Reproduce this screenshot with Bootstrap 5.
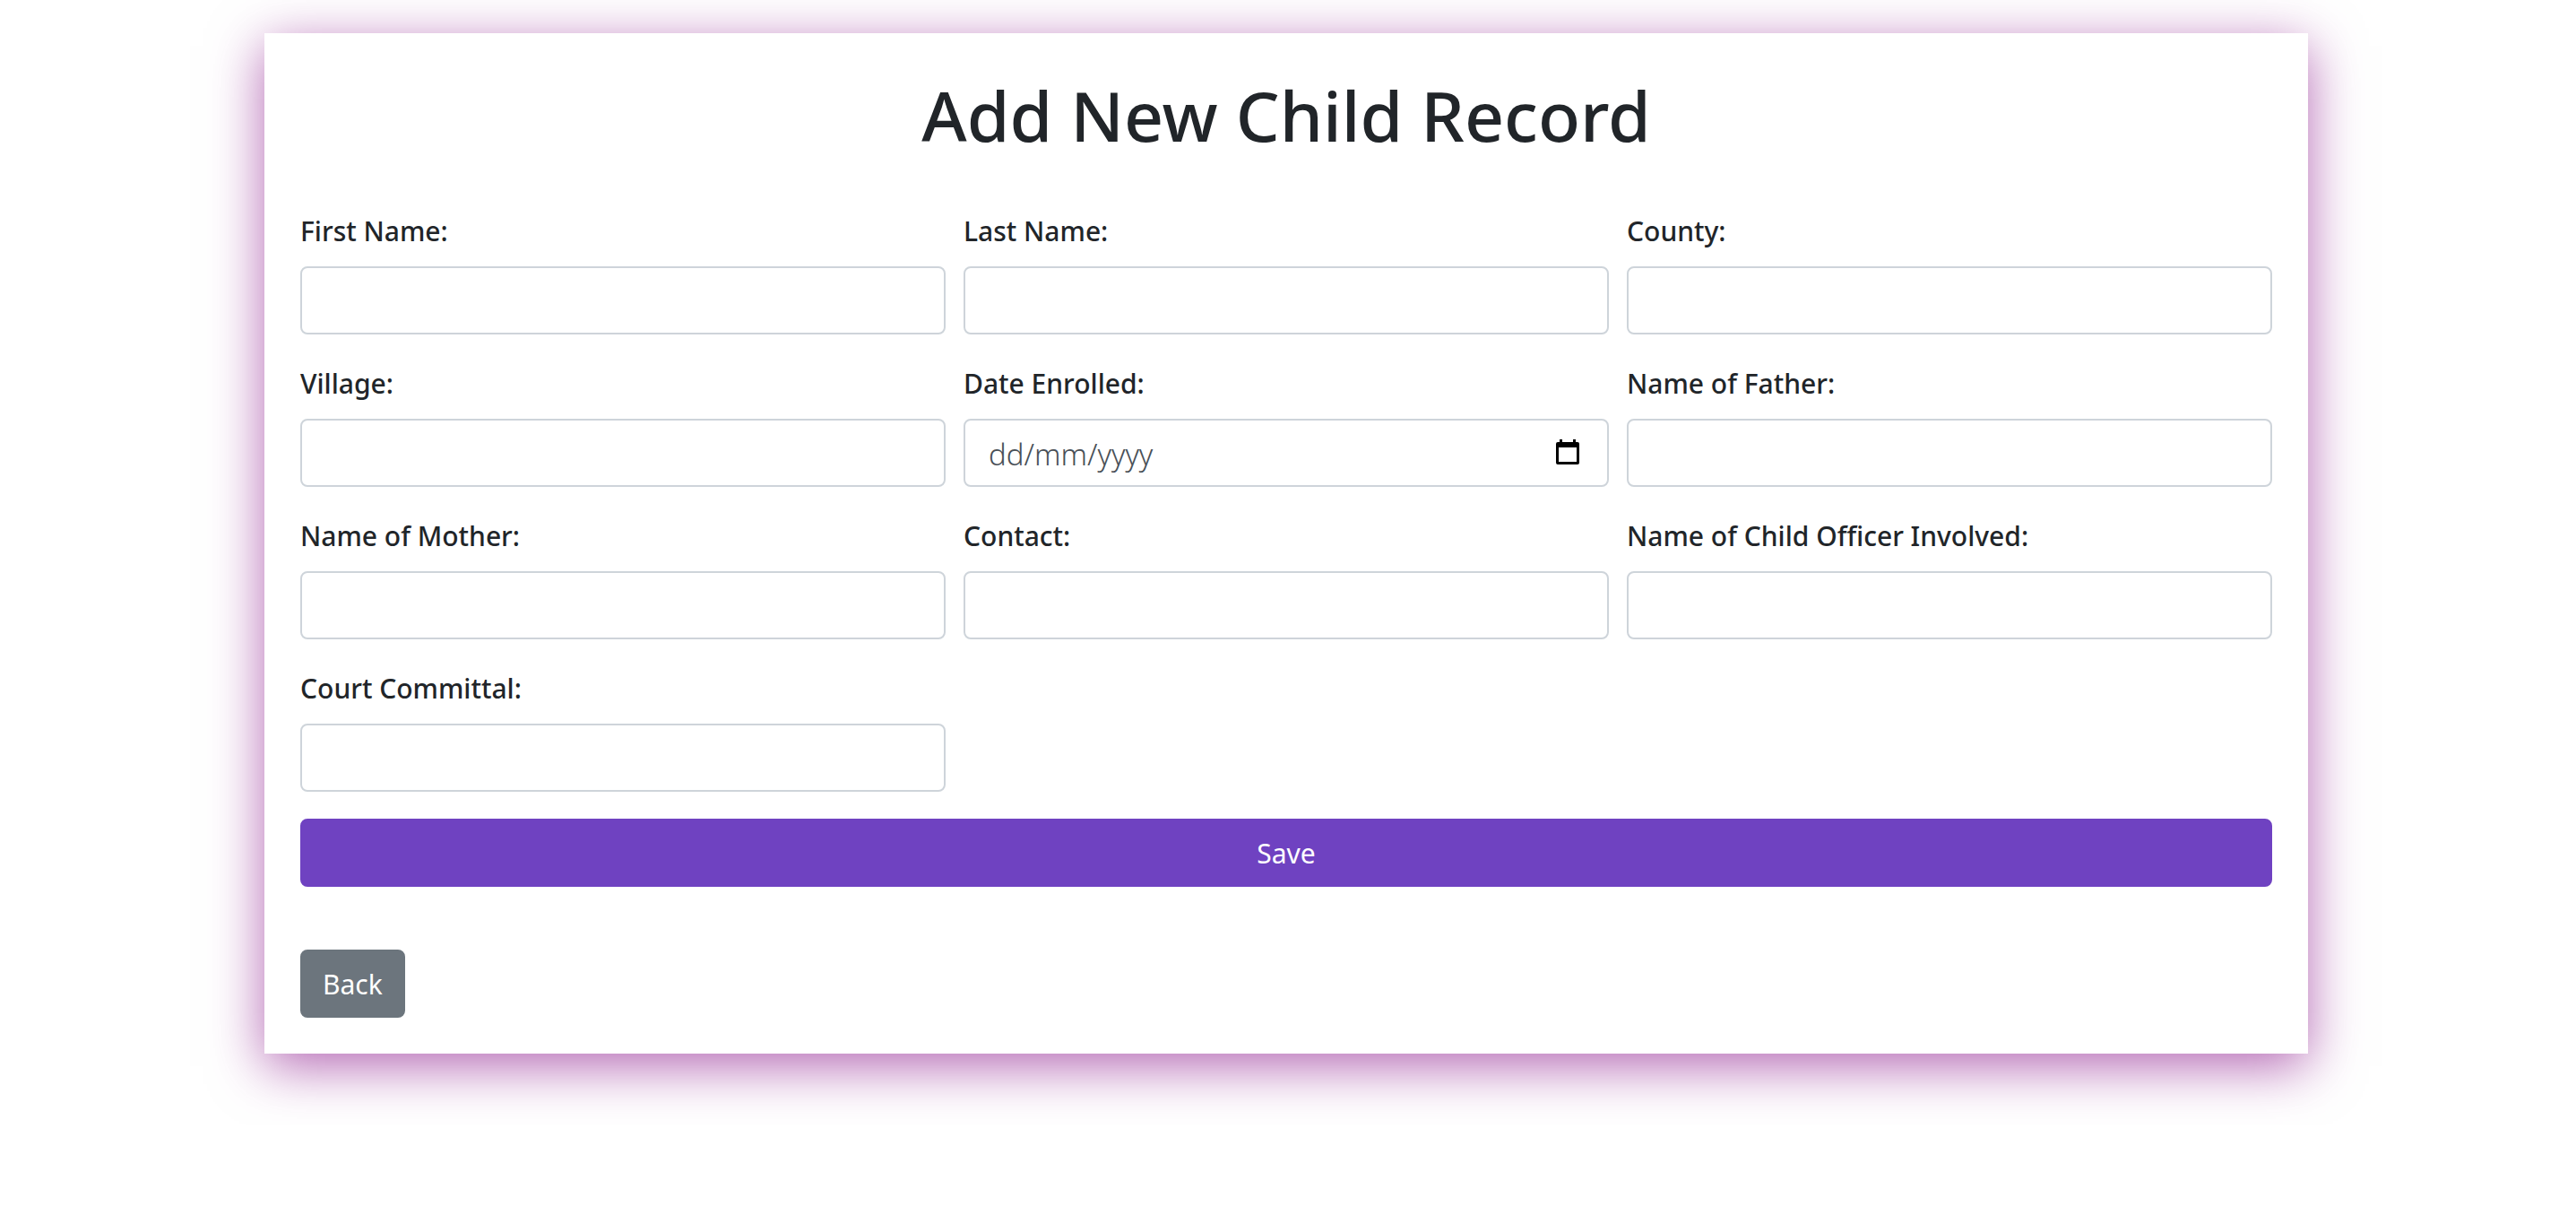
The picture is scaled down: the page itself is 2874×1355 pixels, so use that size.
<!DOCTYPE html>
<html lang="en">
<head>
<meta charset="utf-8">
<meta name="viewport" content="width=device-width, initial-scale=1">
<title>Add New Child Record</title>
<link href="https://cdn.jsdelivr.net/npm/bootstrap@5.3.0/dist/css/bootstrap.min.css" rel="stylesheet">
<style>
  body { font-family: "Noto Sans", sans-serif; font-size: 30px; line-height: 48px; color: #212529; background: #fff; padding: 37px 4px 80px 0; }
  .record-card { max-width: 2280px; padding: 40px; background: #fff; box-shadow: 0 14px 56px rgba(128, 0, 128, .6); }
  .record-title { font-size: 77px; line-height: 104px; font-weight: 500; margin-bottom: 52px; }
  .record-form { --bs-gutter-x: 20px; --bs-gutter-y: 30px; }
  .record-form .form-label { display: block; font-weight: 500; line-height: 50px; margin-bottom: 14px; }
  .record-form .form-control { height: 76px; font-size: 33px; padding: 13px 26px 11px; border: 2px solid #ced4da; border-radius: 8px; }
  .record-form .form-control::placeholder { color: #495057; font-weight: 300; opacity: 1; }
  .date-toggle { position: absolute; right: 30px; top: 22px; width: 32px; height: 32px; line-height: 0; background: none; }
  .record-btn { font-size: 30px; line-height: 48px; padding: 13px 23px 11px; border-width: 2px; border-radius: 8px; }
  .btn-save { --bs-btn-color: #fff; --bs-btn-bg: #6f42c1; --bs-btn-border-color: #6f42c1; --bs-btn-hover-color: #fff; --bs-btn-hover-bg: #5e37a6; margin-top: 30px; }
  .btn-back { margin-top: 70px; }
</style>
<script src="https://cdn.jsdelivr.net/npm/bootstrap@5.3.0/dist/js/bootstrap.bundle.min.js"></script>
</head>
<body>
<main class="record-card mx-auto">
  <h1 class="record-title text-center">Add New Child Record</h1>
  <form>
    <div class="row record-form mt-0">
      <div class="col-4 mt-0"><label class="form-label" for="firstName">First Name:</label><input class="form-control" type="text" id="firstName"></div>
      <div class="col-4 mt-0"><label class="form-label" for="lastName">Last Name:</label><input class="form-control" type="text" id="lastName"></div>
      <div class="col-4 mt-0"><label class="form-label" for="county">County:</label><input class="form-control" type="text" id="county"></div>
      <div class="col-4"><label class="form-label" for="village">Village:</label><input class="form-control" type="text" id="village"></div>
      <div class="col-4"><label class="form-label" for="enrolled">Date Enrolled:</label>
        <div class="position-relative">
          <input class="form-control" type="text" id="enrolled" placeholder="dd/mm/yyyy">
          <button class="date-toggle border-0 p-0" type="button" aria-label="Choose date">
            <svg width="32" height="32" viewBox="0 0 32 32" aria-hidden="true"><path fill="#000" fill-rule="evenodd" d="M7 1h3v3h12V1h3v3h2a2 2 0 0 1 2 2v21a2 2 0 0 1-2 2H5a2 2 0 0 1-2-2V6a2 2 0 0 1 2-2h2zM6 10v16h20V10z"/></svg>
          </button>
        </div>
      </div>
      <div class="col-4"><label class="form-label" for="father">Name of Father:</label><input class="form-control" type="text" id="father"></div>
      <div class="col-4"><label class="form-label" for="mother">Name of Mother:</label><input class="form-control" type="text" id="mother"></div>
      <div class="col-4"><label class="form-label" for="contact">Contact:</label><input class="form-control" type="text" id="contact"></div>
      <div class="col-4"><label class="form-label" for="officer">Name of Child Officer Involved:</label><input class="form-control" type="text" id="officer"></div>
      <div class="col-4"><label class="form-label" for="court">Court Committal:</label><input class="form-control" type="text" id="court"></div>
    </div>
    <button class="btn record-btn btn-save d-block w-100" type="submit">Save</button>
  </form>
  <button class="btn record-btn btn-secondary btn-back d-block" type="button">Back</button>
</main>
</body>
</html>
